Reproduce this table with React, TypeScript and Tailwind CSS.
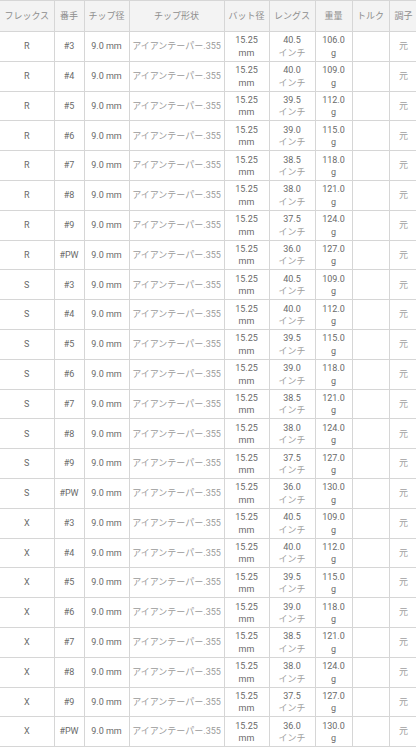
const irons = ["#3", "#4", "#5", "#6", "#7", "#8", "#9", "#PW"];
const lengths = ["40.5", "40.0", "39.5", "39.0", "38.5", "38.0", "37.5", "36.0"];

const flexes = [
  { flex: "R", base: 106 },
  { flex: "S", base: 109 },
  { flex: "X", base: 109 },
];

const rows = flexes.flatMap((f) =>
  irons.map((iron, i) => ({
    flex: f.flex,
    iron,
    length: lengths[i],
    weight: (f.base + i * 3).toFixed(1),
  }))
);

const headers = [
  { label: "フレックス", w: "w-[54px]" },
  { label: "番手", w: "w-[30px]" },
  { label: "チップ径", w: "w-[45px]" },
  { label: "チップ形状", w: "w-[95px]" },
  { label: "バット径", w: "w-[45px]" },
  { label: "レングス", w: "w-[46px]" },
  { label: "重量", w: "w-[37px]" },
  { label: "トルク", w: "w-[37px]" },
  { label: "調子", w: "w-[29px]" },
];

export default function App() {
  return (
    <div
      className="w-[416px] h-[747px] overflow-hidden bg-white"
      style={{ fontFamily: 'Roboto, "Noto Sans CJK JP", sans-serif' }}
    >
      <table className="w-[418px] table-fixed border-collapse text-[9px] leading-[12.5px] text-center text-[#6a6a6a]">
        <thead>
          <tr className="bg-[#f3f3f3] h-[31px]">
            {headers.map((h) => (
              <th
                key={h.label}
                className={`${h.w} font-normal text-[#8e8e8e] border border-[#d6d6d6] first:border-l-0 px-0`}
              >
                {h.label}
              </th>
            ))}
          </tr>
        </thead>
        <tbody>
          {rows.map((r, idx) => (
            <tr key={idx} className="h-[29.8px]">
              <td className="border border-[#d6d6d6] border-l-0">{r.flex}</td>
              <td className="border border-[#d6d6d6]">{r.iron}</td>
              <td className="border border-[#d6d6d6]">9.0 mm</td>
              <td className="border border-[#d6d6d6] text-[#9a9a9a] whitespace-nowrap">
                アイアンテーパー.355
              </td>
              <td className="border border-[#d6d6d6] pt-[1px]">
                15.25
                <br />
                mm
              </td>
              <td className="border border-[#d6d6d6] pt-[1px]">
                {r.length}
                <br />
                <span className="text-[#9e9e9e]">インチ</span>
              </td>
              <td className="border border-[#d6d6d6] pt-[1px]">
                {r.weight}
                <br />g
              </td>
              <td className="border border-[#d6d6d6]"></td>
              <td className="border border-[#d6d6d6] text-[#a0a0a0]">元</td>
            </tr>
          ))}
        </tbody>
      </table>
    </div>
  );
}
